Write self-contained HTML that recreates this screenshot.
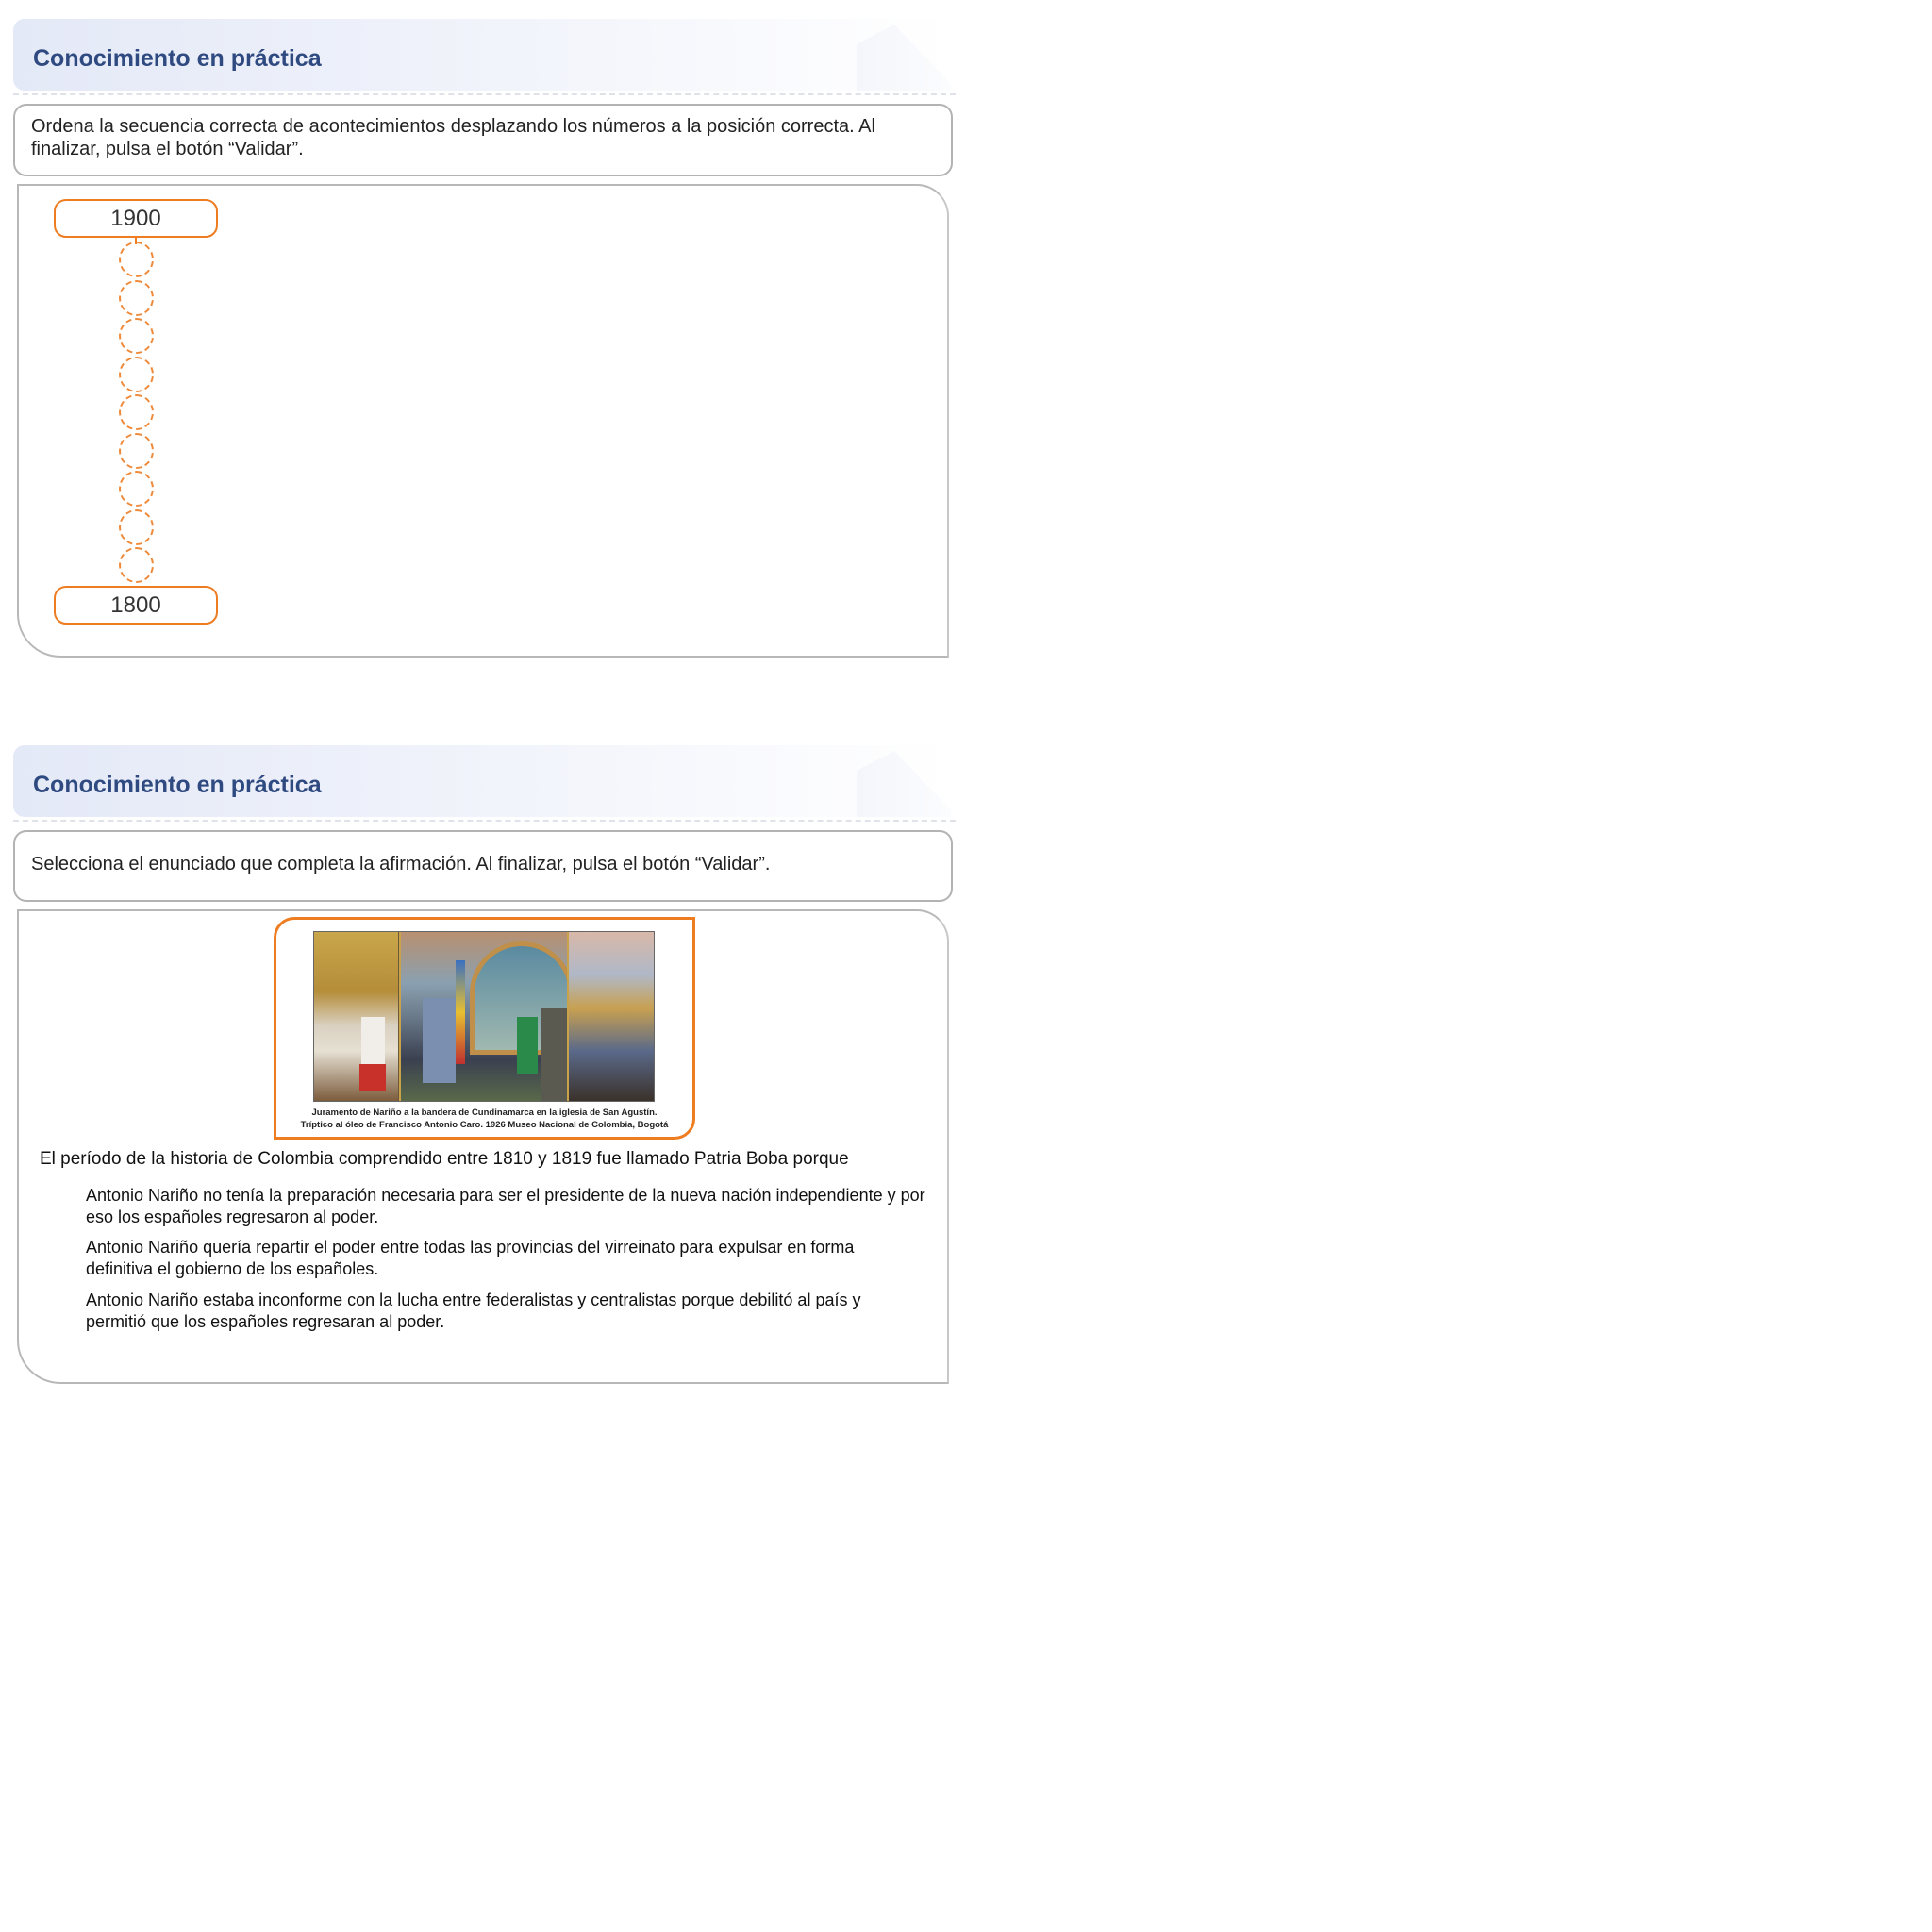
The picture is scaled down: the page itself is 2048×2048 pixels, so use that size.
<!DOCTYPE html>
<html><head><meta charset="utf-8"><style>
*{box-sizing:border-box;margin:0;padding:0}
body{width:2048px;height:2048px;background:#fff;position:relative;font-family:"Liberation Sans",Arial,sans-serif;overflow:hidden}
.abs{position:absolute}
.hdr{left:14px;width:994px;height:76px;border-radius:12px 12px 0 12px;background:linear-gradient(90deg,#e4e9f7 0%,#eef1fa 40%,#f8f9fd 75%,#fff 100%);overflow:hidden}
.hdr .shape{position:absolute;right:0;top:6px;width:100px;height:70px;background:linear-gradient(90deg,#f5f6fb,#fbfcfe);clip-path:polygon(0 100%,0 30%,40% 0,100% 90%,100% 100%)}
.hdr h2{position:absolute;left:21px;font-size:25px;font-weight:bold;color:#2f4a80}
.dash{left:14px;width:999px;border-top:2px dashed #dfe2e8}
.instr{left:14px;width:996px;border:2px solid #b3b3b3;border-radius:14px;font-size:20px;color:#222;line-height:24px;padding-left:17px;white-space:nowrap}
.panel{left:18px;width:988px;border:2px solid #b8b8b8;border-radius:0 34px 0 46px;border-right-color:#c8c8c8}
.yr{left:57px;width:174px;height:41px;border:2px solid #ee7d22;border-radius:13px;font-size:24px;color:#333;text-align:center;line-height:37px}
.c{left:126px;width:37px;height:38px;border:2px dashed #ee8a3a;border-radius:50%}
.opt{left:91px;width:910px;font-size:18px;color:#111;line-height:23px;white-space:nowrap}
</style></head><body>

<div class="abs hdr" style="top:20px"><div class="shape"></div><h2 style="top:28px">Conocimiento en práctica</h2></div>
<div class="abs dash" style="top:99px"></div>
<div class="abs instr" style="top:110px;height:77px;padding-top:10px">Ordena la secuencia correcta de acontecimientos desplazando los números a la posición correcta. Al<br>finalizar, pulsa el botón “Validar”.</div>
<div class="abs panel" style="top:195px;height:502px"></div>
<div class="abs yr" style="top:211px">1900</div>
<div class="abs" style="left:143px;top:250px;width:2px;height:9px;background:#ee7d22"></div>
<div class="abs c" style="top:256px"></div>
<div class="abs c" style="top:297px"></div>
<div class="abs c" style="top:337px"></div>
<div class="abs c" style="top:378px"></div>
<div class="abs c" style="top:418px"></div>
<div class="abs c" style="top:459px"></div>
<div class="abs c" style="top:499px"></div>
<div class="abs c" style="top:540px"></div>
<div class="abs c" style="top:580px"></div>
<div class="abs yr" style="top:621px">1800</div>

<div class="abs hdr" style="top:790px"><div class="shape"></div><h2 style="top:28px">Conocimiento en práctica</h2></div>
<div class="abs dash" style="top:869px"></div>
<div class="abs instr" style="top:880px;height:76px;padding-top:22px">Selecciona el enunciado que completa la afirmación. Al finalizar, pulsa el botón “Validar”.</div>
<div class="abs panel" style="top:964px;height:503px"></div>

<div class="abs" style="left:290px;top:972px;width:447px;height:236px;border:3px solid #ee7d22;border-radius:22px 0 22px 0"></div>
<div class="abs" style="left:332px;top:987px;width:362px;height:181px;border:1px solid #666;background:#6b5a3a;overflow:hidden">
  <div class="abs" style="left:0;top:0;width:89px;height:180px;background:linear-gradient(180deg,#c9a64a 0%,#b58d3a 35%,#d9d0c0 55%,#e6e0d3 70%,#7a5a3a 100%)"></div>
  <div class="abs" style="left:50px;top:90px;width:25px;height:50px;background:#f1eee9"></div>
  <div class="abs" style="left:48px;top:140px;width:28px;height:28px;background:#c8302a"></div>
  <div class="abs" style="left:90px;top:0;width:2px;height:180px;background:#c9a24a"></div>
  <div class="abs" style="left:92px;top:0;width:176px;height:180px;background:linear-gradient(180deg,#b89070 0%,#8aa0b0 30%,#6a7a8a 50%,#3a4050 75%,#5a6a4a 100%)"></div>
  <div class="abs" style="left:165px;top:10px;width:110px;height:120px;border-radius:55px 55px 0 0;background:linear-gradient(180deg,#5a8aa0,#a0b8b0);border:5px solid #c0904a"></div>
  <div class="abs" style="left:115px;top:70px;width:35px;height:90px;background:#7b90b0"></div>
  <div class="abs" style="left:150px;top:30px;width:10px;height:110px;background:linear-gradient(180deg,#3a70c0,#e8c030 50%,#c03030)"></div>
  <div class="abs" style="left:215px;top:90px;width:22px;height:60px;background:#2a8a4a"></div>
  <div class="abs" style="left:240px;top:80px;width:28px;height:100px;background:#5a5a50"></div>
  <div class="abs" style="left:268px;top:0;width:2px;height:180px;background:#c9a24a"></div>
  <div class="abs" style="left:270px;top:0;width:92px;height:180px;background:linear-gradient(180deg,#d8b8a8 0%,#b0b8c8 25%,#c8a050 45%,#5a6a8a 70%,#3a3028 100%)"></div>
</div>
<div class="abs" style="left:290px;top:1173px;width:447px;text-align:center;font-size:9.5px;font-weight:bold;color:#222;line-height:13px;white-space:nowrap">Juramento de Nariño a la bandera de Cundinamarca en la iglesia de San Agustín.<br>Tríptico al óleo de Francisco Antonio Caro. 1926 Museo Nacional de Colombia, Bogotá</div>

<div class="abs" style="left:42px;top:1218px;font-size:19px;color:#111">El período de la historia de Colombia comprendido entre 1810 y 1819 fue llamado Patria Boba porque</div>
<div class="abs opt" style="top:1256px">Antonio Nariño no tenía la preparación necesaria para ser el presidente de la nueva nación independiente y por<br>eso los españoles regresaron al poder.</div>
<div class="abs opt" style="top:1311px">Antonio Nariño quería repartir el poder entre todas las provincias del virreinato para expulsar en forma<br>definitiva el gobierno de los españoles.</div>
<div class="abs opt" style="top:1367px">Antonio Nariño estaba inconforme con la lucha entre federalistas y centralistas porque debilitó al país y<br>permitió que los españoles regresaran al poder.</div>
</body></html>
